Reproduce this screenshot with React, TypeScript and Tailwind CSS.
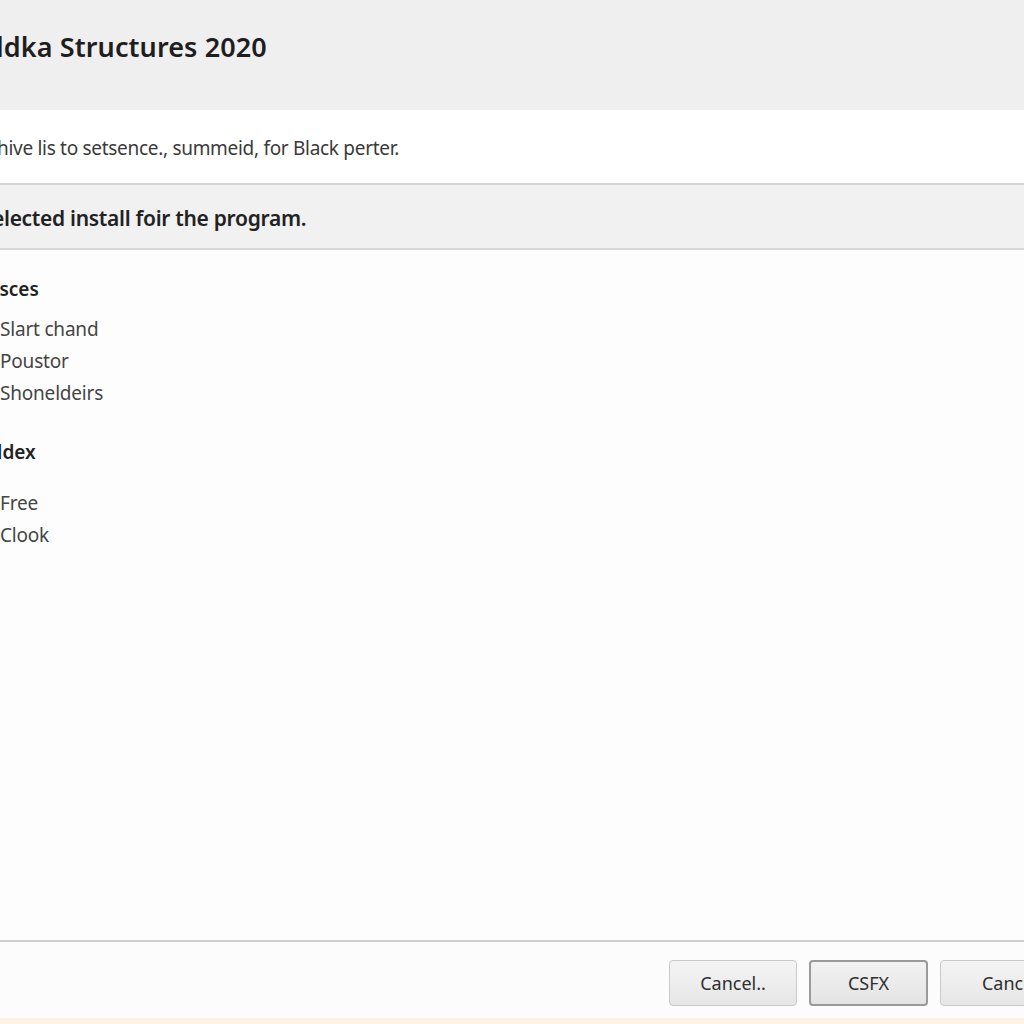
export default function App() {
  const font = { fontFamily: '"Noto Sans", "Open Sans", sans-serif' };
  return (
    <div className="w-[1024px] h-[1024px] overflow-hidden bg-[#fcfcfc] flex flex-col text-[#222]" style={font}>
      {/* title band */}
      <header className="h-[110px] shrink-0 bg-[#efefef] flex items-center pb-[16px]">
        <h1 className="text-[27px] font-semibold tracking-[0.1px] text-[#1e1e1e] -ml-[4px]">ldka Structures 2020</h1>
      </header>

      <div className="h-[75px] shrink-0 bg-white flex items-center pt-[4px] border-b-2 border-[#d4d4d4]">
        <p className="text-[19px] tracking-[-0.3px] text-[#3a3a3a] -ml-[3px]">hive lis to setsence., summeid, for Black perter.</p>
      </div>

      <div className="h-[65px] shrink-0 bg-[#f1f1f1] flex items-center pt-[4px] border-b-2 border-[#d8d8d8]">
        <p className="text-[21px] font-semibold tracking-[-0.3px] text-[#222] -ml-[8px]">elected install foir the program.</p>
      </div>

      {/* options */}
      <main className="flex-1 bg-[#fdfdfd] pt-[26px]">
        <h2 className="text-[19px] font-semibold text-[#222] -ml-[11px] leading-[26px]">ysces</h2>
        <ul className="mt-[11px] flex flex-col text-[19px] tracking-[-0.2px] text-[#454545] leading-[32px]">
          <li>Slart chand</li>
          <li>Poustor</li>
          <li>Shoneldeirs</li>
        </ul>
        <h2 className="mt-[30px] text-[19px] font-semibold text-[#222] -ml-[3px] leading-[26px]">ldex</h2>
        <ul className="mt-[22px] flex flex-col text-[19px] tracking-[-0.2px] text-[#454545] leading-[32px]">
          <li>Free</li>
          <li>Clook</li>
        </ul>
      </main>

      {/* buttons */}
      <footer className="h-[78px] shrink-0 bg-[#fcfcfc] border-t-2 border-[#cfcfcf] flex items-start pt-[18px] gap-[12px] pl-[669px]">
        <button className="w-[128px] h-[46px] shrink-0 rounded-[4px] border border-[#c9c9c9] bg-gradient-to-b from-[#f4f4f4] to-[#e6e6e6] text-[18px] text-[#2e2e2e]">Cancel..</button>
        <button className="w-[119px] h-[46px] shrink-0 rounded-[4px] border-2 border-[#9a9a9a] bg-gradient-to-b from-[#f2f2f2] to-[#e4e4e4] text-[18px] text-[#2e2e2e]">CSFX</button>
        <button className="w-[140px] h-[46px] shrink-0 rounded-[4px] border border-[#c9c9c9] bg-gradient-to-b from-[#f4f4f4] to-[#e6e6e6] text-[18px] text-[#2e2e2e]">Cancel</button>
      </footer>
      <div className="h-[6px] shrink-0 bg-[#fdf3e4]" />
    </div>
  );
}
